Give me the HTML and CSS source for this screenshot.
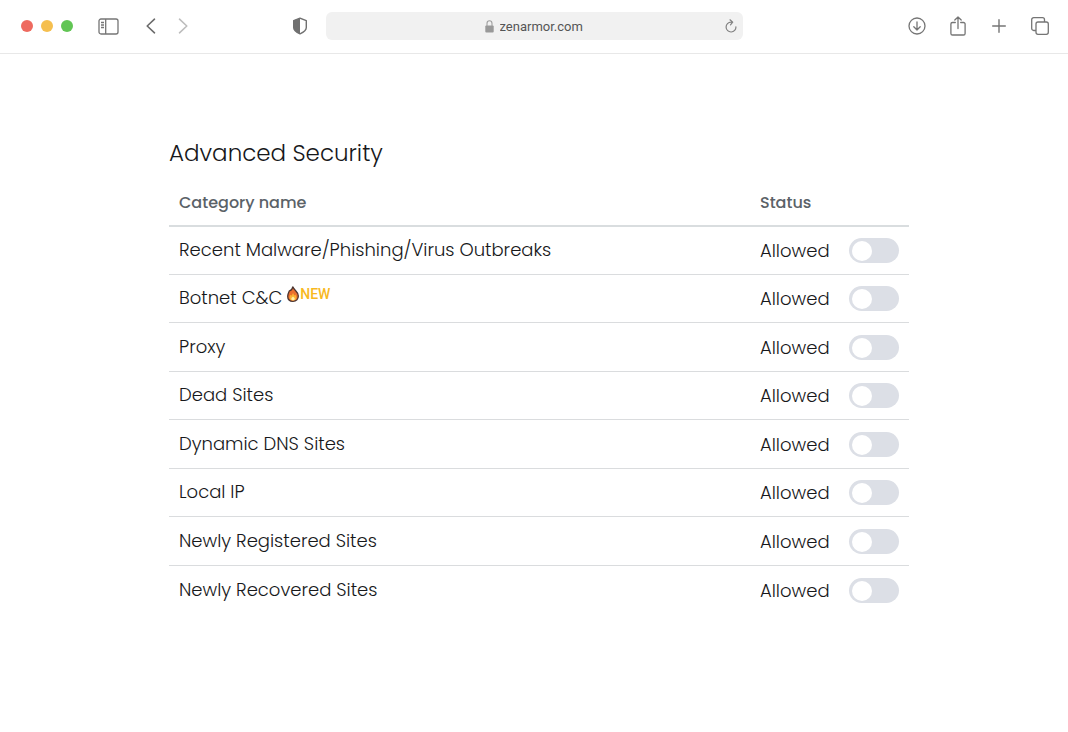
FILE: index.html
```html
<!DOCTYPE html>
<html lang="en">
<head>
    <meta charset="UTF-8">
    <meta name="viewport" content="width=device-width, initial-scale=1.0">
    <title>Advanced Security</title>
    <link rel="stylesheet" href="styles.css">
</head>
<body>

<header class="toolbar">
    <div class="toolbar-left">
        <div class="lights">
            <span class="light red"></span>
            <span class="light yellow"></span>
            <span class="light green"></span>
        </div>
        <button class="icon-button sidebar" aria-label="Sidebar">
            <svg width="21" height="17" viewBox="0 0 21 17" fill="none" stroke="#757575" stroke-width="1.3">
                <rect x="1" y="1" width="19" height="15" rx="2"/>
                <path d="M7.7 1v15M3 4.5h3M3 7h3M3 9.500h3"/>
            </svg>
        </button>
        <button class="icon-button nav" aria-label="Back">
            <svg width="10" height="16" viewBox="0 0 10 16" fill="none" stroke="#6b6b6b" stroke-width="1.6" stroke-linecap="round" stroke-linejoin="round">
                <path d="M8.500 1.200L1.200 8l7.300 6.800"/>
            </svg>
        </button>
        <button class="icon-button nav" aria-label="Forward" disabled>
            <svg width="10" height="16" viewBox="0 0 10 16" fill="none" stroke="#bdbdbd" stroke-width="1.6" stroke-linecap="round" stroke-linejoin="round">
                <path d="M1.500 1.200L8.800 8l-7.300 6.800"/>
            </svg>
        </button>
        <button class="icon-button shield" aria-label="Privacy report">
            <svg width="16" height="18" viewBox="0 0 16 18">
                <path d="M8 1.200L14.300 3.600V10.500C14.300 13.500 11 15.500 8 16.800C5 15.500 1.700 13.500 1.700 10.500V3.600Z" fill="none" stroke="#707070" stroke-width="1.400" stroke-linejoin="round"/>
                <path d="M8 1.200L1.700 3.600V10.500C1.700 13.500 5 15.500 8 16.800Z" fill="#707070"/>
            </svg>
        </button>
    </div>

    <div class="address">
        <svg class="lock" width="9" height="13" viewBox="0 0 9 13">
            <rect x="0.300" y="5.600" width="8.400" height="7" rx="1" fill="#999"/>
            <path d="M2 6V3.500a2.500 2.700 0 0 1 5 0V6" fill="none" stroke="#a0a0a0" stroke-width="1.100"/>
        </svg>
        <input class="url" type="text" value="zenarmor.com" aria-label="Address">
        <button class="icon-button reload" aria-label="Reload">
            <svg width="12" height="14" viewBox="0 0 12 14" fill="none" stroke="#808080" stroke-width="1.200" stroke-linecap="round" stroke-linejoin="round">
                <path d="M7.500 3.200H6A4.900 4.900 0 1 0 10.900 7.800M5 .8l2.700 2.400L5.500 5.800"/>
            </svg>
        </button>
    </div>

    <div class="toolbar-right">
        <button class="icon-button" aria-label="Downloads">
            <svg width="18" height="18" viewBox="0 0 18 18" fill="none" stroke="#757575" stroke-width="1.300" stroke-linecap="round" stroke-linejoin="round">
                <circle cx="9" cy="9" r="8"/>
                <path d="M9 5v8M5.800 9.800L9 13l3.200-3.200"/>
            </svg>
        </button>
        <button class="icon-button" aria-label="Share">
            <svg width="16" height="20" viewBox="0 0 16 20" fill="none" stroke="#757575" stroke-width="1.300" stroke-linecap="round" stroke-linejoin="round">
                <path d="M5.300 6.500H2.500a1.600 1.600 0 0 0-1.600 1.600v9.300a1.600 1.600 0 0 0 1.600 1.600h11a1.600 1.600 0 0 0 1.600-1.600V8.100a1.600 1.600 0 0 0-1.600-1.600h-2.800M8 12.500V1M4.800 4L8 1l3.200 3"/>
            </svg>
        </button>
        <button class="icon-button" aria-label="New tab">
            <svg width="14" height="14" viewBox="0 0 14 14" fill="none" stroke="#757575" stroke-width="1.400" stroke-linecap="round">
                <path d="M7 .7v12.600M.7 7h12.600"/>
            </svg>
        </button>
        <button class="icon-button" aria-label="Tabs">
            <svg width="18" height="18" viewBox="0 0 18 18" fill="none" stroke="#757575" stroke-width="1.300">
                <rect x="5" y="5" width="12.300" height="12.300" rx="2"/>
                <path d="M5 13.500H2.700a2 2 0 0 1-2-2V2.700a2 2 0 0 1 2-2h8.800a2 2 0 0 1 2 2V5"/>
            </svg>
        </button>
    </div>
</header>

<main class="content">
    <h1>Advanced Security</h1>

    <table class="categories">
        <thead>
            <tr>
                <th>Category name</th>
                <th class="status">Status</th>
            </tr>
        </thead>
        <tbody>
            <tr>
                <td><label for="malware">Recent Malware/Phishing/Virus Outbreaks</label></td>
                <td><div class="state">Allowed <input type="checkbox" class="switch" id="malware"></div></td>
            </tr>
            <tr>
                <td>
                    <label for="botnet">Botnet C&amp;C</label>
                    <span class="badge">
                        <svg width="12" height="16" viewBox="0 0 12 16">
                            <path d="M5.800.8C6.400 2.300 7.200 3 8.300 4.200c1.800 1.800 3 3.600 3 5.900 0 3.200-2 5.200-5.300 5.200S.7 13.300.7 10.200c0-2.300 1-3.700 1.700-5.400C3.700 4.600 5.300 2.800 5.800.8Z" fill="#ea6f2f" stroke="#4a3430" stroke-width="1.300" stroke-linejoin="round"/>
                            <path d="M6 6.700c.3 1.300 1 1.900 1.700 2.900.2-.3.400-.6.400-1 .9 1 1.400 1.900 1.400 3 0 1.900-1.400 3-3.500 3s-3.500-1.100-3.500-3c0-1.300.5-2.100 1.100-2.900.3.400.5.700.6 1.100C4.900 9 5.700 8 6 6.700Z" fill="#fbb034"/>
                            <path d="M6 10.600c1.200.9 1.700 1.500 1.700 2.300S7 14.300 6 14.300s-1.700-.6-1.700-1.400.5-1.400 1.700-2.300Z" fill="#fff0a8"/>
                        </svg>NEW
                    </span>
                </td>
                <td><div class="state">Allowed <input type="checkbox" class="switch" id="botnet"></div></td>
            </tr>
            <tr>
                <td><label for="proxy">Proxy</label></td>
                <td><div class="state">Allowed <input type="checkbox" class="switch" id="proxy"></div></td>
            </tr>
            <tr>
                <td><label for="dead">Dead Sites</label></td>
                <td><div class="state">Allowed <input type="checkbox" class="switch" id="dead"></div></td>
            </tr>
            <tr>
                <td><label for="dns">Dynamic DNS Sites</label></td>
                <td><div class="state">Allowed <input type="checkbox" class="switch" id="dns"></div></td>
            </tr>
            <tr>
                <td><label for="local">Local IP</label></td>
                <td><div class="state">Allowed <input type="checkbox" class="switch" id="local"></div></td>
            </tr>
            <tr>
                <td><label for="registered">Newly Registered Sites</label></td>
                <td><div class="state">Allowed <input type="checkbox" class="switch" id="registered"></div></td>
            </tr>
            <tr>
                <td><label for="recovered">Newly Recovered Sites</label></td>
                <td><div class="state">Allowed <input type="checkbox" class="switch" id="recovered"></div></td>
            </tr>
        </tbody>
    </table>
</main>

</body>
</html>
```
FILE: styles.css
```css
* {
    box-sizing: border-box;
}

body {
    margin: 0;
    background-color: #fff;
    color: #17181a;
    font-family: Poppins, Inter, sans-serif;
    font-size: 18px;
    font-weight: 300;
}

/* Browser toolbar */
.toolbar {
    display: grid;
    grid-template-columns: 1fr minmax(0, 417px) 1fr;
    align-items: center;
    height: 54px;
    padding-bottom: 1px;
    border-bottom: 1px solid #e8e8e8;
}

.toolbar-left,
.toolbar-right {
    display: flex;
    align-items: center;
}

.toolbar-left {
    padding: 0 10px 0 21px;
}

.toolbar-right {
    justify-content: flex-end;
    padding-right: 8px;
}

.lights {
    display: flex;
    gap: 8px;
    margin-right: 15px;
}

.light {
    width: 12px;
    height: 12px;
    border-radius: 50%;
}

.red {
    background-color: #ee6a5f;
}

.yellow {
    background-color: #f5bf4f;
}

.green {
    background-color: #61c554;
}

.icon-button {
    display: flex;
    align-items: center;
    justify-content: center;
    width: 41px;
    height: 32px;
    padding: 0;
    border: none;
    background: none;
}

.icon-button.sidebar {
    margin-right: 6px;
}

.icon-button.nav {
    width: 32px;
}

.icon-button.shield {
    width: 32px;
    margin-left: auto;
}

.address {
    display: flex;
    align-items: center;
    justify-content: center;
    gap: 6px;
    position: relative;
    height: 28px;
    border-radius: 6px;
    background-color: #f1f1f1;
}

.url {
    width: 84px;
    padding: 0;
    border: none;
    background: none;
    color: #555;
    font-family: Roboto, sans-serif;
    font-size: 13px;
}

.icon-button.reload {
    position: absolute;
    right: 0;
    width: 24px;
    height: 28px;
}

/* Page */
.content {
    max-width: 750px;
    margin: 0 auto;
    padding: 84px 0 40px 10px;
}

h1 {
    margin: 0;
    font-size: 23px;
    font-weight: 300;
    line-height: 30px;
}

.categories {
    width: 100%;
    margin-top: 11px;
    border-collapse: separate;
    border-spacing: 0;
}

th,
td {
    height: 48px;
    padding: 0 10px;
    border-bottom: 1px solid #dadcde;
    text-align: left;
}

th {
    border-bottom: 2px solid #d9dddf;
    color: #5b6268;
    font-size: 16px;
    font-weight: 500;
}

.status {
    width: 159px;
}

tbody tr:nth-child(2n+3) td {
    height: 49px;
}

tbody td:first-child {
    padding-bottom: 2px;
}

tbody tr:last-child td {
    border-bottom: none;
}

.state {
    display: flex;
    align-items: center;
    justify-content: space-between;
}

.badge {
    display: inline-flex;
    align-items: center;
    gap: 1px;
    vertical-align: 2px;
    color: #f8b91e;
    font-family: Roboto, sans-serif;
    font-size: 14px;
    font-weight: 500;
    line-height: 16px;
}

.switch {
    appearance: none;
    width: 50px;
    height: 25px;
    margin: 0;
    padding: 3px;
    border-radius: 13px;
    background-color: #dcdfe6;
    cursor: pointer;
}

.switch::before {
    content: "";
    display: block;
    width: 20px;
    height: 20px;
    border-radius: 50%;
    background-color: #fff;
}

.switch:checked {
    background-color: #3c82f6;
}

.switch:checked::before {
    margin-left: auto;
}
```
